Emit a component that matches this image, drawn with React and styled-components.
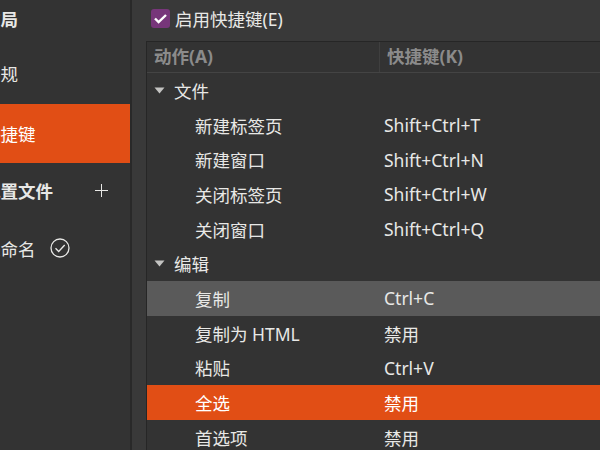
import styled, { createGlobalStyle } from "styled-components";

const Global = createGlobalStyle`
  html, body {
    margin: 0;
    padding: 0;
    background: #333333;
  }
  body {
    font-family: "Noto Sans", "Noto Sans CJK SC", sans-serif;
    font-size: 17.5px;
    color: #e8e8e6;
  }
`;

const Window = styled.div`
  width: 600px;
  height: 450px;
  display: flex;
  overflow: hidden;
  background: #333333;
`;

const Sidebar = styled.aside`
  width: 130px;
  flex: none;
  height: 450px;
  overflow: hidden;
  background: #333333;
  border-right: 2px solid #292929;
`;

const SideHeading = styled.div`
  height: ${(p) => p.$height}px;
  display: flex;
  align-items: center;
  justify-content: space-between;
  padding-right: 22px;
  font-weight: 700;
  white-space: nowrap;
`;

const SideItem = styled.div`
  box-sizing: border-box;
  height: ${(p) => p.$height}px;
  padding-top: ${(p) => p.$top || 0}px;
  display: flex;
  align-items: center;
  gap: 14px;
  white-space: nowrap;
  background: ${(p) => (p.$active ? "#e14e15" : "transparent")};
  color: ${(p) => (p.$active ? "#ffffff" : "#e8e8e6")};
`;

const Clipped = styled.span`
  margin-left: ${(p) => p.$shift}px;
`;

const Main = styled.main`
  flex: 1;
  min-width: 0;
  background: #393939;
  padding-left: 14px;
  display: flex;
  flex-direction: column;
`;

const CheckRow = styled.label`
  height: 37px;
  padding-bottom: 4px;
  flex: none;
  display: flex;
  align-items: center;
  gap: 5px;
  padding-left: 5px;
  white-space: nowrap;
`;

const Checkbox = styled.span`
  width: 19px;
  height: 19px;
  border-radius: 3px;
  background: #77367a;
  display: flex;
  align-items: center;
  justify-content: center;
`;

const Tree = styled.div`
  flex: 1;
  background: #333333;
  border-top: 1px solid #262626;
  border-left: 1px solid #262626;
`;

const Header = styled.div`
  height: 30px;
  display: grid;
  grid-template-columns: 232px 1fr;
  border-bottom: 1px solid #444444;
  color: #8b8b8b;
  font-weight: 700;
`;

const HeaderCell = styled.div`
  display: flex;
  align-items: center;
  padding: 0 0 3px ${(p) => p.$pad}px;
  & + & {
    border-left: 1px solid #3f3f3f;
  }
`;

const Row = styled.div`
  height: 34.7px;
  display: grid;
  grid-template-columns: 237px 1fr;
  align-items: center;
  white-space: nowrap;
  background: ${(p) =>
    p.$state === "selected" ? "#e14e15" : p.$state === "hover" ? "#5a5a5a" : "transparent"};
  color: ${(p) => (p.$state === "selected" ? "#ffffff" : "#e8e8e6")};
`;

const Group = styled.div`
  display: flex;
  align-items: center;
  gap: 9px;
  padding-left: 7px;
`;

const Action = styled.div`
  padding-left: 48px;
`;

const Arrow = () => (
  <svg width="11" height="7" viewBox="0 0 11 7">
    <path d="M0.5 0.5h10L5.5 6.5z" fill="#c4c4c2" />
  </svg>
);

const CheckMark = () => (
  <svg width="15" height="15" viewBox="0 0 15 15" fill="none">
    <path d="M2 7.5l3.6 3.6L13 4" stroke="#ffffff" strokeWidth="2.4" />
  </svg>
);

const Plus = () => (
  <svg width="13" height="13" viewBox="0 0 13 13" style={{ flex: "none" }}>
    <path d="M6.5 0v13M0 6.5h13" stroke="#e8e8e6" strokeWidth="1" fill="none" />
  </svg>
);

const CircleCheck = () => (
  <svg width="20" height="20" viewBox="0 0 20 20" fill="none">
    <circle cx="10" cy="10" r="9" stroke="#e8e8e6" strokeWidth="1.3" />
    <path d="M5.5 10.2l3.2 3.2 6-6.4" stroke="#e8e8e6" strokeWidth="1.4" />
  </svg>
);

const rows = [
  { group: "文件" },
  { name: "新建标签页", keys: "Shift+Ctrl+T" },
  { name: "新建窗口", keys: "Shift+Ctrl+N" },
  { name: "关闭标签页", keys: "Shift+Ctrl+W" },
  { name: "关闭窗口", keys: "Shift+Ctrl+Q" },
  { group: "编辑" },
  { name: "复制", keys: "Ctrl+C", state: "hover" },
  { name: "复制为 HTML", keys: "禁用" },
  { name: "粘贴", keys: "Ctrl+V" },
  { name: "全选", keys: "禁用", state: "selected" },
  { name: "首选项", keys: "禁用" },
];

const App = () => {
  return (
    <Window>
      <Global />
      <Sidebar>
        <SideHeading $height={36}>
          <Clipped $shift={-17}>布局</Clipped>
        </SideHeading>
        <SideItem $height={68} $top={6}>
          <Clipped $shift={-17}>常规</Clipped>
        </SideItem>
        <SideItem $height={59} $active>
          <Clipped $shift={-17}>快捷键</Clipped>
        </SideItem>
        <SideHeading $height={55}>
          <Clipped $shift={-17}>配置文件</Clipped>
          <Plus />
        </SideHeading>
        <SideItem $height={60}>
          <Clipped $shift={-17}>未命名</Clipped>
          <CircleCheck />
        </SideItem>
      </Sidebar>
      <Main>
        <CheckRow>
          <Checkbox>
            <CheckMark />
          </Checkbox>
          启用快捷键(E)
        </CheckRow>
        <Tree>
          <Header>
            <HeaderCell $pad={7}>动作(A)</HeaderCell>
            <HeaderCell $pad={7}>快捷键(K)</HeaderCell>
          </Header>
          {rows.map((row) =>
            row.group ? (
              <Row key={row.group}>
                <Group>
                  <Arrow />
                  {row.group}
                </Group>
              </Row>
            ) : (
              <Row key={row.name} $state={row.state}>
                <Action>{row.name}</Action>
                <div>{row.keys}</div>
              </Row>
            )
          )}
        </Tree>
      </Main>
    </Window>
  );
};

export default App;
